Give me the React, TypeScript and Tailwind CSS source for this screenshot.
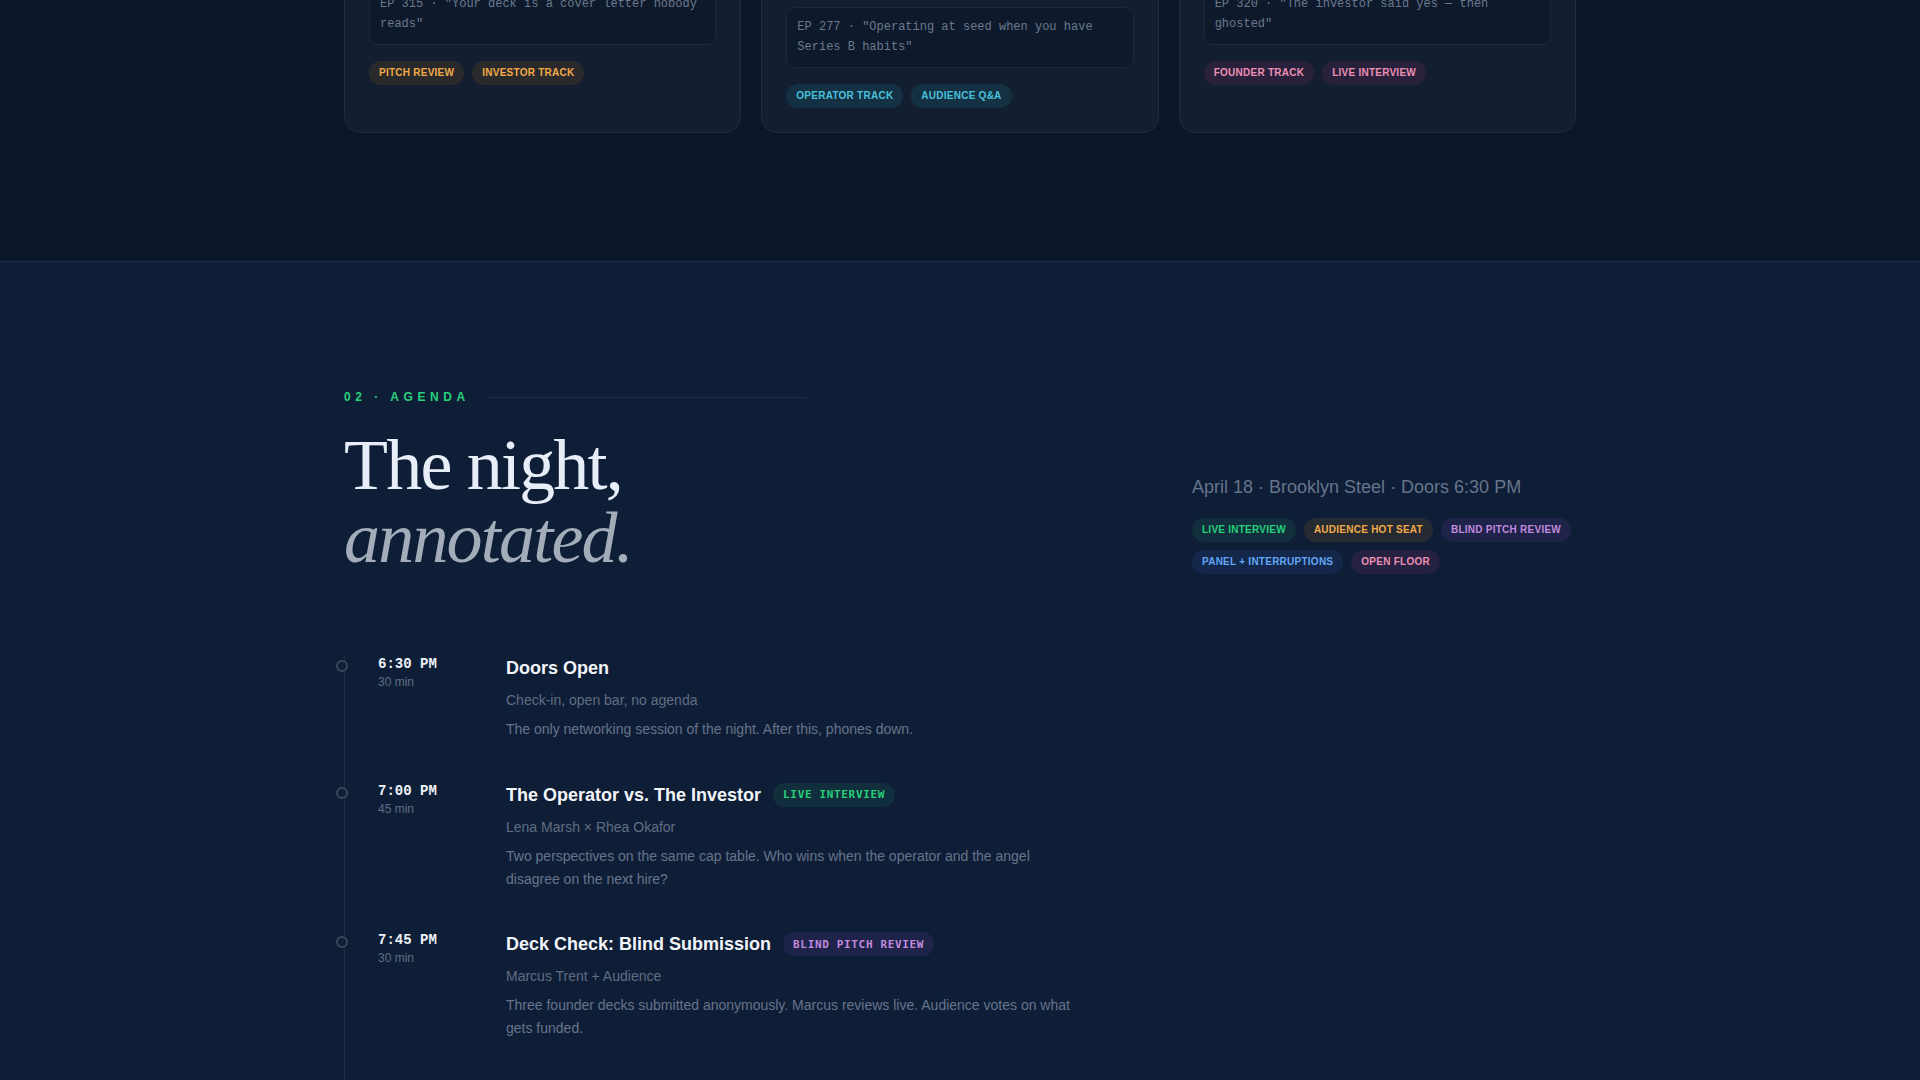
import React from "react";

type Tone = "amber" | "cyan" | "pink" | "green" | "purple" | "blue";

const toneClass: Record<Tone, string> = {
  amber: "text-[#f2aa48] bg-[#f59e0b]/10",
  cyan: "text-[#48c2dc] bg-[#22d3ee]/10",
  pink: "text-[#ec8fb4] bg-[#ec4899]/10",
  green: "text-[#27cf7c] bg-[#22c55e]/10",
  purple: "text-[#c28ade] bg-[#a855f7]/10",
  blue: "text-[#62a6f5] bg-[#3b82f6]/10",
};

function Tag({ tone, children }: { tone: Tone; children: React.ReactNode }) {
  return (
    <span
      className={`inline-flex h-6 items-center rounded-full px-2.5 text-[10px] font-bold uppercase leading-none tracking-[0.025em] ${toneClass[tone]}`}
    >
      {children}
    </span>
  );
}

function MonoBadge({ tone, children }: { tone: Tone; children: React.ReactNode }) {
  return (
    <span
      className={`inline-flex h-6 items-center rounded-full px-2.5 font-['DejaVu_Sans_Mono',monospace] text-[11px] font-bold uppercase leading-none tracking-[0.06em] ${toneClass[tone]}`}
    >
      {children}
    </span>
  );
}

type Card = {
  ep: string;
  title: string;
  body: string;
  quote: string;
  tags: { tone: Tone; label: string }[];
  headH: string;
};

const cards: Card[] = [
  {
    ep: "Marcus Trent",
    title: "The Deck Doctor",
    body: "Has read more pitch decks than anyone should. Tells you which slide lost the room.",
    quote: 'EP 315 · "Your deck is a cover letter nobody reads"',
    tags: [
      { tone: "amber", label: "Pitch Review" },
      { tone: "amber", label: "Investor Track" },
    ],
    headH: "h-[120px]",
  },
  {
    ep: "Lena Marsh",
    title: "The Operator",
    body: "Scaled two companies past Series B. Knows what the org chart looks like at every stage.",
    quote: 'EP 277 · "Operating at seed when you have Series B habits"',
    tags: [
      { tone: "cyan", label: "Operator Track" },
      { tone: "cyan", label: "Audience Q&A" },
    ],
    headH: "h-[143px]",
  },
  {
    ep: "Rhea Okafor",
    title: "The Angel",
    body: "Forty checks written, twelve returned. Will tell you exactly why she passed.",
    quote: 'EP 320 · "The investor said yes — then ghosted"',
    tags: [
      { tone: "pink", label: "Founder Track" },
      { tone: "pink", label: "Live Interview" },
    ],
    headH: "h-[120px]",
  },
];

type Item = {
  time: string;
  dur: string;
  title: string;
  badge?: { tone: Tone; label: string };
  sub: string;
  desc: string;
};

const items: Item[] = [
  {
    time: "6:30 PM",
    dur: "30 min",
    title: "Doors Open",
    sub: "Check-in, open bar, no agenda",
    desc: "The only networking session of the night. After this, phones down.",
  },
  {
    time: "7:00 PM",
    dur: "45 min",
    title: "The Operator vs. The Investor",
    badge: { tone: "green", label: "Live Interview" },
    sub: "Lena Marsh × Rhea Okafor",
    desc: "Two perspectives on the same cap table. Who wins when the operator and the angel disagree on the next hire?",
  },
  {
    time: "7:45 PM",
    dur: "30 min",
    title: "Deck Check: Blind Submission",
    badge: { tone: "purple", label: "Blind Pitch Review" },
    sub: "Marcus Trent + Audience",
    desc: "Three founder decks submitted anonymously. Marcus reviews live. Audience votes on what gets funded.",
  },
  {
    time: "8:15 PM",
    dur: "30 min",
    title: "The Hot Seat",
    badge: { tone: "amber", label: "Audience Hot Seat" },
    sub: "Open to the room",
    desc: "Three founders, three minutes each, no slides.",
  },
];

export default function App() {
  return (
    <div className="h-[1080px] w-full overflow-hidden bg-[#0f1e37] font-['Liberation_Sans',Arial,sans-serif] text-slate-200">
      {/* Previous section (scrolled past) */}
      <section className="flex h-[262px] flex-col justify-end overflow-hidden border-b border-[#1e2c43] bg-[#0b1628]">
        <div className="mx-auto w-full max-w-[1280px] px-6 pb-[128px]">
          <div className="grid grid-cols-3 gap-5">
            {cards.map((c) => (
              <div
                key={c.ep}
                className="flex flex-col rounded-2xl border border-[#1f2b3e] bg-[#131e30] p-6"
              >
                <div className={`${c.headH} overflow-hidden`}>
                  <div className="text-xs font-bold uppercase tracking-widest text-slate-500">{c.ep}</div>
                  <h3 className="mt-2 text-2xl font-semibold text-slate-100">{c.title}</h3>
                  <p className="mt-2 text-sm leading-relaxed text-slate-400">{c.body}</p>
                </div>
                <div className="rounded-lg border border-[#1c283b] bg-[#0e1a2c] p-2.5 font-['Liberation_Mono',monospace] text-xs leading-[19.5px] text-[#6b798d]">
                  {c.quote}
                </div>
                <div className="mt-4 flex flex-wrap gap-2">
                  {c.tags.map((t) => (
                    <Tag key={t.label} tone={t.tone}>
                      {t.label}
                    </Tag>
                  ))}
                </div>
              </div>
            ))}
          </div>
        </div>
      </section>

      {/* Agenda */}
      <section className="pt-[127px]">
        <div className="mx-auto w-full max-w-[1280px] px-6">
          <div className="flex items-end justify-between">
            <div>
              <div className="flex items-center gap-4">
                <span className="text-xs font-bold uppercase leading-4 tracking-[0.38em] text-[#27cf7c]">
                  02 · Agenda
                </span>
                <span className="h-px w-80 bg-[#1e2c43]" />
              </div>
              <h2 className="mt-6 font-['Liberation_Serif',serif] text-[72px] font-normal leading-[73px] tracking-[-0.025em] text-[#e8eef7]">
                The night,
                <br />
                <em className="italic text-[#a3adba]">annotated.</em>
              </h2>
            </div>
            <div className="w-96 pb-px">
              <p className="text-lg leading-7 text-[#66758b]">April 18 · Brooklyn Steel · Doors 6:30 PM</p>
              <div className="mt-[17px] flex flex-wrap gap-2">
                <Tag tone="green">Live Interview</Tag>
                <Tag tone="amber">Audience Hot Seat</Tag>
                <Tag tone="purple">Blind Pitch Review</Tag>
                <Tag tone="blue">Panel + Interruptions</Tag>
                <Tag tone="pink">Open Floor</Tag>
              </div>
            </div>
          </div>

          <ol className="mt-[79px] border-l border-[#1e2b40]">
            {items.map((it) => (
              <li key={it.time} className="relative grid grid-cols-[128px_1fr] pb-10 pl-[33px]">
                <span className="absolute left-[-9px] top-[6px] h-3 w-3 rounded-full border-2 border-[#3a475a] bg-[#0f1e37]" />
                <div>
                  <div className="font-['Liberation_Mono',monospace] text-sm font-bold leading-5 text-[#eef2f8]">
                    {it.time}
                  </div>
                  <div className="text-xs leading-4 text-[#5f6d82]">{it.dur}</div>
                </div>
                <div>
                  <div className="flex items-center gap-3">
                    <h3 className="text-lg font-bold leading-7 text-[#f1f5f9]">{it.title}</h3>
                    {it.badge && <MonoBadge tone={it.badge.tone}>{it.badge.label}</MonoBadge>}
                  </div>
                  <p className="mt-2 text-sm leading-5 text-[#5f6d82]">{it.sub}</p>
                  <p className="mt-2 max-w-xl text-sm leading-relaxed text-[#66748a]">{it.desc}</p>
                </div>
              </li>
            ))}
          </ol>
        </div>
      </section>
    </div>
  );
}
